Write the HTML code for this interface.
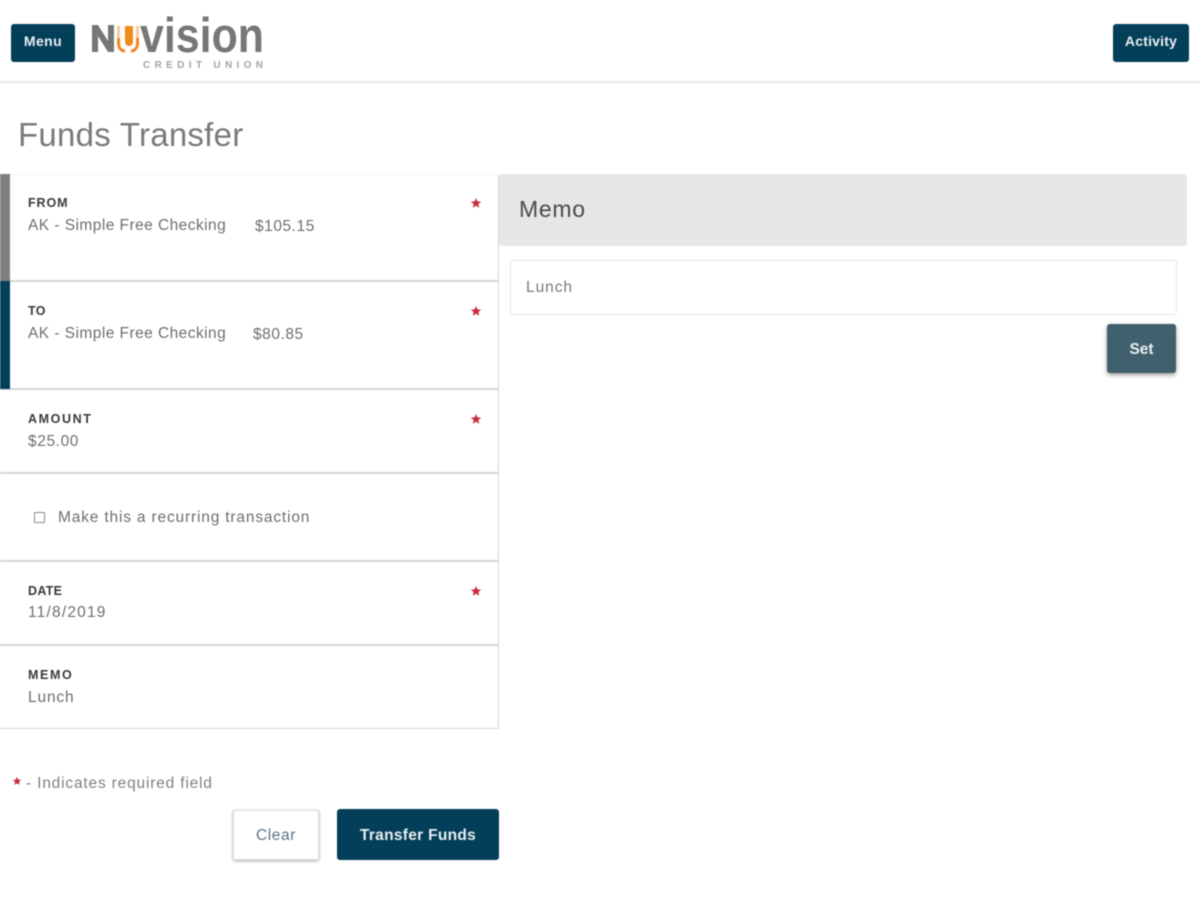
<!DOCTYPE html>
<html lang="en">
<head>
<meta charset="utf-8">
<title>Funds Transfer</title>
<style>
html,body{margin:0;padding:0;background:#fff}
body{width:1200px;height:900px;overflow:hidden;position:relative;font-family:"Liberation Sans",sans-serif;color:#666}
#w{position:absolute;left:0;top:0;width:1200px;height:900px;filter:blur(.5px)}
#w div{position:absolute;white-space:nowrap}
.btn{background:#043f5a;color:#e8eef1;border-radius:3px;text-align:center;font-weight:bold}
.line{background:#d6d6d6;height:2px;left:0;width:498px}
.lab{left:28px;font-size:12.5px;line-height:16px;font-weight:bold;color:#3a3a3a;letter-spacing:.3px}
.val{font-size:15.5px;line-height:20px;color:#6e6e6e;letter-spacing:.45px}
.star{position:absolute;left:470px}
</style>
</head>
<body>
<div id="w">
  <div class="btn" style="left:11px;top:24px;width:64px;height:38px;line-height:35px;font-size:14px;letter-spacing:.4px">Menu</div>

  <svg style="position:absolute;left:90px;top:12px" width="180" height="60" viewBox="0 0 180 60">
    <path d="M2 40V13h6l10 16V13h6v27h-6L8 24v16z" fill="#77777a"/>
    <path d="M35 14h8v15c0 3-1.500 5-4 5s-4-2-4-5z" fill="#f08a1c"/>
    <path d="M28.500 14V26M47.500 14V26" stroke="#f08a1c" stroke-width="3" opacity=".45" fill="none"/>
    <path d="M28.500 26V31c0 5 3 8 6.500 8M47.500 26V31c0 5-3 8-6.500 8" stroke="#f08a1c" stroke-width="3" fill="none"/>
    <text x="50" y="40" font-family="Liberation Sans" font-size="49" font-weight="bold" fill="#77777a" textLength="124" lengthAdjust="spacingAndGlyphs">vision</text>
    <text x="53" y="56" font-family="Liberation Sans" font-size="10" font-weight="bold" fill="#a3a3a3" textLength="120">CREDIT UNION</text>
  </svg>

  <div class="btn" style="left:1113px;top:24px;width:76px;height:38px;line-height:35px;font-size:14px;letter-spacing:.2px">Activity</div>
  <div style="left:0;top:81px;width:1200px;height:2px;background:#e6e6e6"></div>

  <div style="left:18px;top:114px;font-size:33px;line-height:42px;color:#7a7a7a;letter-spacing:.25px">Funds Transfer</div>

  <div style="left:0;top:174px;width:498px;height:1px;background:#eee"></div>
  <div style="left:498px;top:174px;width:1px;height:555px;background:#d8d8d8"></div>
  <div class="line" style="top:280px"></div>
  <div class="line" style="top:388px"></div>
  <div class="line" style="top:472px"></div>
  <div class="line" style="top:560px"></div>
  <div class="line" style="top:644px"></div>
  <div class="line" style="top:728px;height:1px"></div>
  <div style="left:0;top:174px;width:10px;height:107px;background:#808080"></div>
  <div style="left:0;top:281px;width:10px;height:108px;background:#043f5a"></div>

  <div class="lab" style="top:195px;letter-spacing:.9px">FROM</div>
  <div class="val" style="left:28px;top:216px">AK - Simple Free Checking</div>
  <div class="val" style="left:255px;top:217px;letter-spacing:.55px">$105.15</div>

  <div class="lab" style="top:303px">TO</div>
  <div class="val" style="left:28px;top:324px">AK - Simple Free Checking</div>
  <div class="val" style="left:253px;top:325px;letter-spacing:.55px">$80.85</div>

  <div class="lab" style="top:411px;letter-spacing:1.6px">AMOUNT</div>
  <div class="val" style="left:28px;top:432px;letter-spacing:.6px">$25.00</div>

  <div style="left:34px;top:512px;width:9px;height:9px;border:1px solid #8a8a8a;border-radius:1px"></div>
  <div class="val" style="left:58px;top:508px;letter-spacing:.83px">Make this a recurring transaction</div>

  <div class="lab" style="top:583px">DATE</div>
  <div class="val" style="left:28px;top:603px;letter-spacing:1.2px">11/8/2019</div>

  <div class="lab" style="top:667px;letter-spacing:1.6px">MEMO</div>
  <div class="val" style="left:28px;top:688px;letter-spacing:.85px">Lunch</div>

  <svg class="star" style="top:197px" width="12" height="12" viewBox="0 0 12 12"><path d="M6 1l1.500 3.400 3.600.3-2.700 2.400.8 3.600L6 8.800l-3.200 1.900.8-3.600L.9 4.700l3.600-.3z" fill="#c8303c"/></svg>
  <svg class="star" style="top:305px" width="12" height="12" viewBox="0 0 12 12"><path d="M6 1l1.500 3.400 3.600.3-2.700 2.400.8 3.600L6 8.800l-3.200 1.900.8-3.600L.9 4.700l3.600-.3z" fill="#c8303c"/></svg>
  <svg class="star" style="top:413px" width="12" height="12" viewBox="0 0 12 12"><path d="M6 1l1.500 3.400 3.600.3-2.700 2.400.8 3.600L6 8.800l-3.200 1.900.8-3.600L.9 4.700l3.600-.3z" fill="#c8303c"/></svg>
  <svg class="star" style="top:585px" width="12" height="12" viewBox="0 0 12 12"><path d="M6 1l1.500 3.400 3.600.3-2.700 2.400.8 3.600L6 8.800l-3.200 1.900.8-3.600L.9 4.700l3.600-.3z" fill="#c8303c"/></svg>

  <svg style="position:absolute;left:12px;top:776px" width="10" height="10" viewBox="0 0 12 12"><path d="M6 1l1.500 3.400 3.600.3-2.700 2.400.8 3.600L6 8.800l-3.200 1.900.8-3.600L.9 4.700l3.600-.3z" fill="#c8303c"/></svg>
  <div class="val" style="left:26px;top:774px;color:#808080;letter-spacing:.82px">- Indicates required field</div>

  <div style="left:233px;top:810px;width:84px;height:48px;border:1px solid #ddd;border-radius:2px;box-shadow:0 1px 3px rgba(0,0,0,.35);text-align:center;line-height:49px;font-size:15.5px;letter-spacing:.6px;color:#5d7480;background:#fff">Clear</div>
  <div class="btn" style="left:337px;top:809px;width:162px;height:51px;line-height:53px;font-size:15.5px;letter-spacing:.3px">Transfer Funds</div>

  <div style="left:499px;top:174px;width:688px;height:72px;background:#e6e6e6;border-radius:3px"></div>
  <div style="left:519px;top:195px;font-size:23px;line-height:28px;color:#4a4a4a;letter-spacing:.7px">Memo</div>

  <div style="left:510px;top:260px;width:665px;height:53px;border:1px solid #e6e6e6;border-radius:3px;background:#fff"></div>
  <div class="val" style="left:526px;top:278px;color:#777;letter-spacing:.95px">Lunch</div>

  <div class="btn" style="left:1107px;top:324px;width:69px;height:49px;line-height:51px;font-size:15.5px;background:#41606d;box-shadow:0 2px 5px rgba(0,0,0,.4)">Set</div>
</div>
</body>
</html>
